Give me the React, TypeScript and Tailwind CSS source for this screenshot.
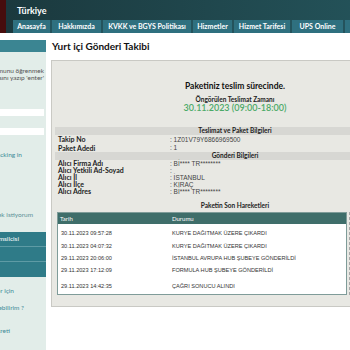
const tabs = [
  { label: 'Anasayfa', w: 'w-[39px]' },
  { label: 'Hakkımızda', w: 'w-[51px]' },
  { label: 'KVKK ve BGYS Politikası', w: 'w-[90px]' },
  { label: 'Hizmetler', w: 'w-[41px]' },
  { label: 'Hizmet Tarifesi', w: 'w-[58px]' },
  { label: 'UPS Online', w: 'w-[53px]' },
  { label: 'İletişim', w: 'w-[44px]' },
];

const paket = [
  { label: 'Takip No', value: ': 1Z01V79Y6866969500', h: 'h-[9px]' },
  { label: 'Paket Adedi', value: ': 1', h: 'h-[8px]' },
];

const gonderi = [
  { label: 'Alıcı Firma Adı', value: ': Bİ**** TR********' },
  { label: 'Alıcı Yetkili Ad-Soyad', value: ':' },
  { label: 'Alıcı İl', value: ': İSTANBUL' },
  { label: 'Alıcı İlçe', value: ': KIRAÇ' },
  { label: 'Alıcı Adres', value: ': Bİ**** TR********' },
];

const hareketler = [
  { tarih: '30.11.2023 09:57:28', durum: 'KURYE DAĞITMAK ÜZERE ÇIKARDI', mt: 'mt-[5.5px]' },
  { tarih: '30.11.2023 04:07:32', durum: 'KURYE DAĞITMAK ÜZERE ÇIKARDI', mt: 'mt-[6px]' },
  { tarih: '29.11.2023 20:06:00', durum: 'İSTANBUL AVRUPA HUB ŞUBEYE GÖNDERİLDİ', mt: 'mt-[5px]' },
  { tarih: '29.11.2023 17:12:09', durum: 'FORMULA HUB ŞUBEYE GÖNDERİLDİ', mt: 'mt-[5px]' },
  { tarih: '29.11.2023 14:42:35', durum: 'ÇAĞRI SONUCU ALINDI', mt: 'mt-[9px]' },
];

function SideLine({ text, pr, mt, className }: { text: string; pr: string; mt: string; className: string }) {
  return (
    <div className={`flex justify-end ${pr} ${mt}`}>
      <span className={`shrink-0 whitespace-nowrap leading-[7px] ${className}`}>{text}</span>
    </div>
  );
}

function Sidebar() {
  return (
    <aside className="h-[310px] w-[46px] shrink-0 overflow-hidden bg-[#e2ede9]">
      <div className="h-[12px] bg-[#3b8592]" />
      <div className="mt-[14.5px] text-[6.5px] text-[#555]">
        <SideLine text="Gönderinizin durumunu öğrenmek" pr="pr-[2px]" mt="" className="" />
        <SideLine text="için takip numarasını yazıp 'enter'" pr="pr-[2px]" mt="" className="" />
      </div>
      <div className="mr-[2px] mt-[28.5px] h-[7px] bg-white" />
      <div className="mr-[2px] mt-[12px] h-[7px] bg-white" />
      <SideLine text="Click for tracking in" pr="pr-[24px]" mt="mt-[15.5px]" className="text-[6.5px] text-[#3d8b98]" />
      <SideLine text="Kargo göndermek istiyorum" pr="pr-[13px]" mt="mt-[53px]" className="text-[6.5px] text-[#5a8f98]" />
      <div className="mt-[14.5px] flex flex-col bg-[#2f7b88]">
        <div className="flex h-[15px] items-center justify-end border-b border-[#5e9ba5] pr-[27px]">
          <span className="shrink-0 whitespace-nowrap text-[6.5px] text-white">Müşteri Temsilcisi</span>
        </div>
        <div className="h-[15px] border-b border-[#5e9ba5]" />
        <div className="h-[15px]" />
      </div>
      <SideLine text="Kurumsal müşteriler için" pr="pr-[32px]" mt="mt-[9.5px]" className="text-[6.5px] text-[#3d8b98]" />
      <SideLine text="Nasıl kargo gönderebilirim ?" pr="pr-[22px]" mt="mt-[10px]" className="text-[6.5px] text-[#3d8b98]" />
      <SideLine text="Gönderi Ücreti" pr="pr-[36px]" mt="mt-[16px]" className="text-[6.5px] text-[#3d8b98]" />
    </aside>
  );
}

function InfoRow({ label, value, h }: { label: string; value: string; h: string }) {
  return (
    <div className={`flex ${h} items-center text-[7px] text-[#222]`}>
      <span className="w-[115px] shrink-0 pl-[3px] font-bold">{label}</span>
      <span className="font-['Liberation_Sans',sans-serif] text-[6.5px] text-[#444]">{value}</span>
    </div>
  );
}

export default function App() {
  return (
    <div className="relative h-[350px] w-[350px] overflow-hidden bg-white font-['Lato',sans-serif]">
      <header className="flex h-[33px]">
        <div className="w-[6px] shrink-0 bg-[#470d0d]" />
        <div className="flex flex-1 flex-col bg-gradient-to-r from-[#1b393e] to-[#24545b]">
          <div className="h-[20px] pl-[11px] pt-[6px] text-[9px] font-bold leading-[10px] text-white">Türkiye</div>
          <nav className="flex h-[13px] pl-[7px]">
            {tabs.map((t) => (
              <div
                key={t.label}
                className={`${t.w} flex shrink-0 items-center justify-center whitespace-nowrap border-r-2 border-[#24535c] bg-[#2f707f] text-[7px] font-bold text-white`}
              >
                {t.label}
              </div>
            ))}
          </nav>
        </div>
      </header>

      <div className="mt-[7px] flex">
        <Sidebar />
        <main className="ml-[5px] flex flex-col">
          <h1 className="h-[20px] pl-[1px] text-[10px] font-bold leading-[12px] text-[#111]">Yurt içi Gönderi Takibi</h1>
          <section className="w-[368px] border border-[#c9c9c4] bg-[#e8e8e3] px-[3px] pb-[11px]">
            <div className="pt-[20px] text-center">
              <p className="text-[8.5px] font-bold leading-[10px] text-[#111]">Paketiniz teslim sürecinde.</p>
              <p className="mt-[5px] text-[6.5px] font-bold leading-[7px] text-[#222]">Öngörülen Teslimat Zamanı</p>
              <p className="text-[9px] font-semibold leading-[9px] text-[#4caa68]">30.11.2023 (09:00-18:00)</p>
            </div>

            <div className="mt-[15px] flex h-[8px] items-center justify-center bg-[#d7d7d3] text-[6.5px] font-bold text-[#222]">
              Teslimat ve Paket Bilgileri
            </div>
            {paket.map((r) => (
              <InfoRow key={r.label} {...r} />
            ))}
            <div className="flex h-[8px] items-center justify-center bg-[#d7d7d3] text-[6.5px] font-bold text-[#222]">
              Gönderi Bilgileri
            </div>
            {gonderi.map((r) => (
              <InfoRow key={r.label} label={r.label} value={r.value} h="h-[7px]" />
            ))}
            <div className="mt-[5px] flex h-[12px] items-center justify-center text-[6.5px] font-bold text-[#222]">
              Paketin Son Hareketleri
            </div>

            <div className="flex">
              <div className="ml-[2px] w-[290px] border border-[#7f9c99] bg-white pb-[4.5px]">
                <div className="flex h-[11px] items-center bg-[#3f6e6a] text-[6px] text-white">
                  <span className="w-[114px] pl-[2px]">Tarih</span>
                  <span>Durumu</span>
                </div>
                {hareketler.map((h) => (
                  <div key={h.tarih} className={`flex ${h.mt} h-[7px] items-center font-['Liberation_Sans',sans-serif] text-[5.6px] text-[#333]`}>
                    <span className="w-[114px] pl-[3px]">{h.tarih}</span>
                    <span>{h.durum}</span>
                  </div>
                ))}
              </div>
              <div className="ml-[2px] w-0 border-l border-dashed border-[#a9a9a9]" />
            </div>
          </section>
        </main>
      </div>
    </div>
  );
}
